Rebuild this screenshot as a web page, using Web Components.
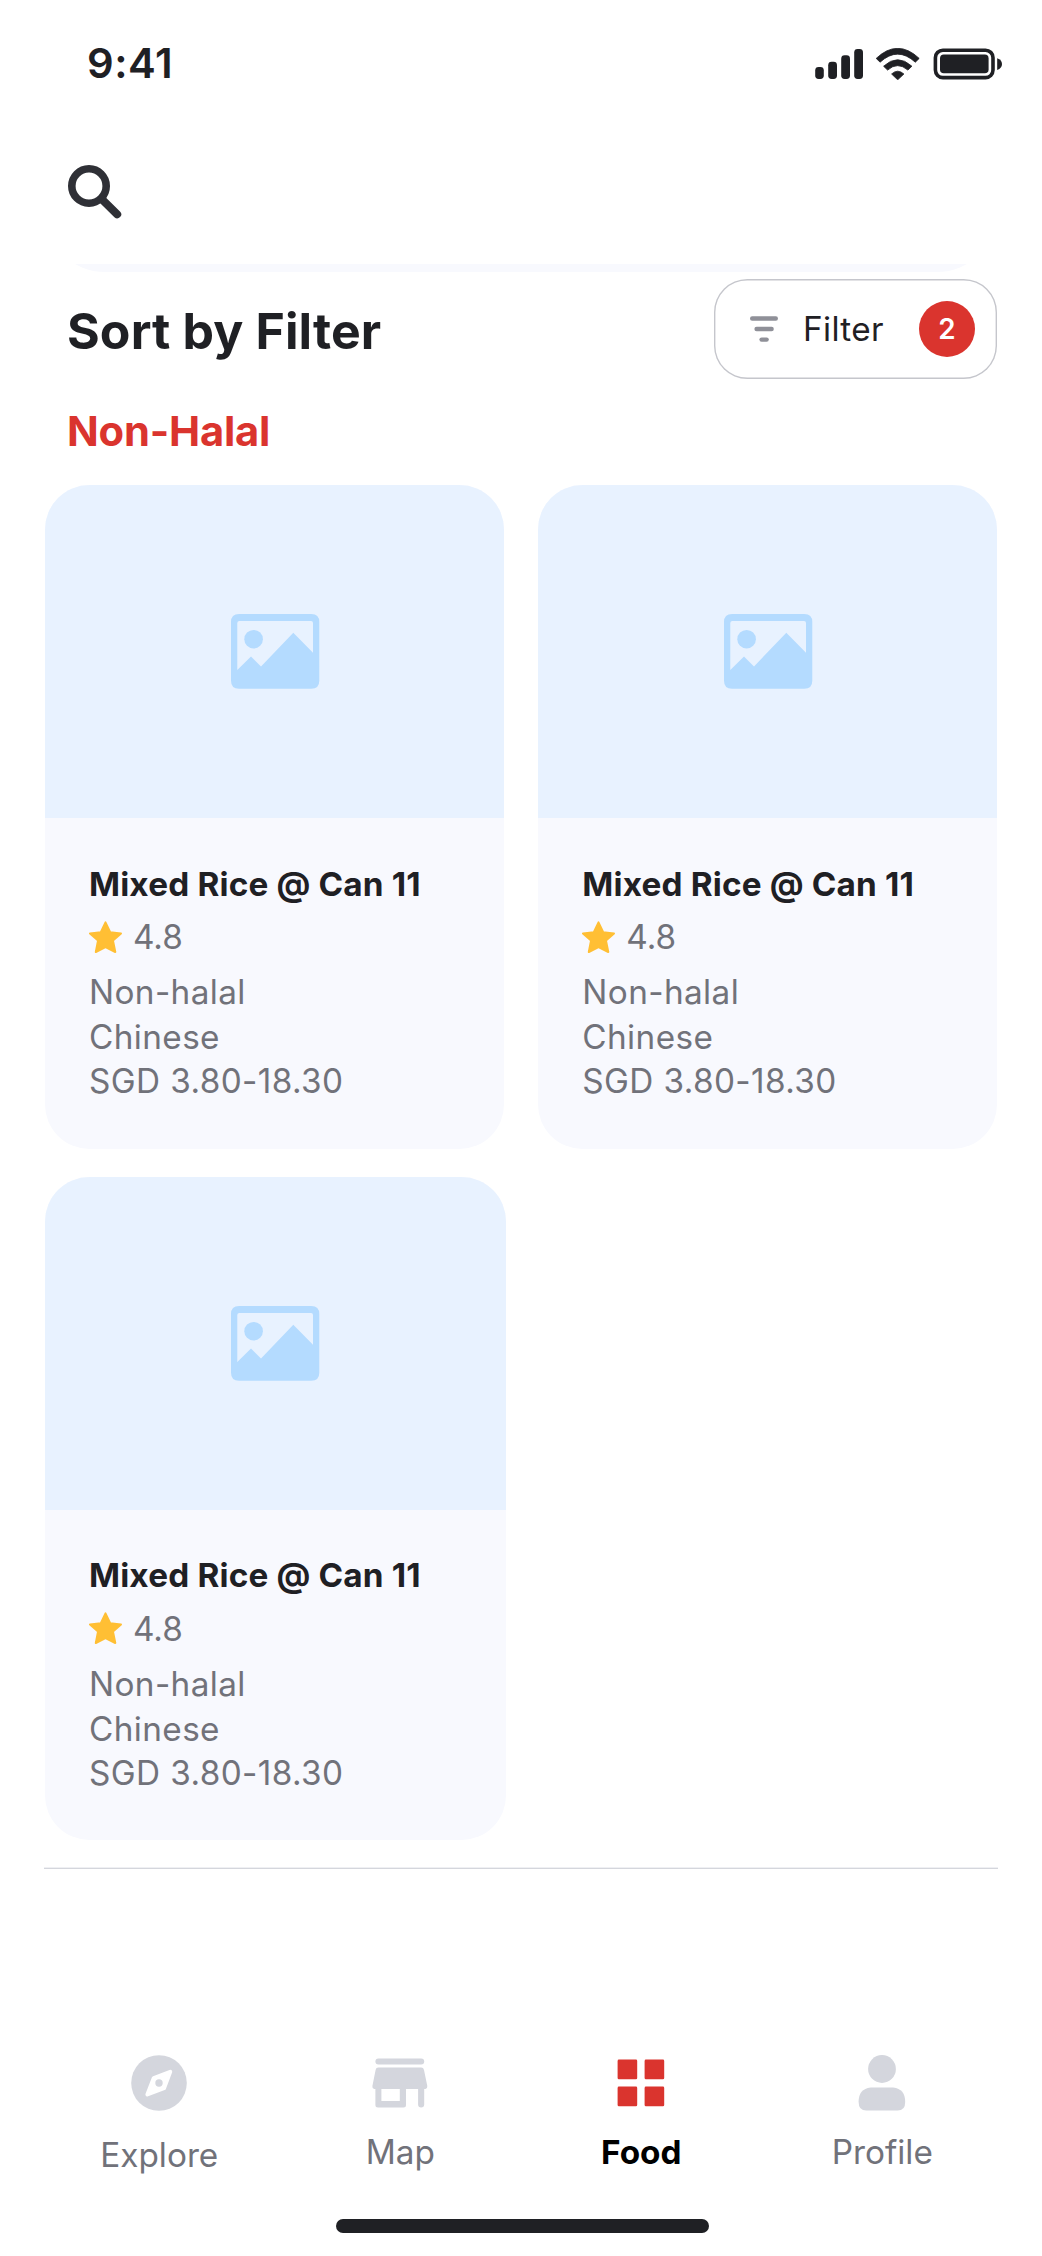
<!DOCTYPE html>
<html lang="en">
<head>
<meta charset="utf-8">
<title>Food</title>
<style>
html,body{margin:0;background:#fff}
body{font-family:Inter,"Liberation Sans",sans-serif;color:#1f2024;width:1042px;height:2256px;overflow:hidden}
</style>
</head>
<body>
<food-screen></food-screen>
<script>
const define = (name, html) => customElements.define(name, class extends HTMLElement {
  constructor() {
    super();
    const t = document.createElement('template');
    t.innerHTML = html;
    this.attachShadow({ mode: 'open' }).append(t.content.cloneNode(true));
  }
});

define('status-bar', `
<style>
:host{display:flex;justify-content:space-between;align-items:center;height:125px;padding:0 40px 0 87px;box-sizing:border-box}
.time{font-weight:600;font-size:41.7px;line-height:50px;letter-spacing:.5px}
svg{display:block;margin-top:3px}
</style>
<div class="time"><slot></slot></div>
<svg width="187" height="32" viewBox="815 48 187 32" fill="#1f2024">
<rect x="815.2" y="67" width="8.6" height="12" rx="3.4"/><rect x="828.2" y="61.8" width="8.8" height="17.2" rx="3.4"/><rect x="841.2" y="55.3" width="8.8" height="23.7" rx="3.4"/><rect x="854.2" y="49" width="8.8" height="30" rx="3.4"/>
<path d="M876.2 58.4Q897.6 38.2 919.2 58.4L915.3 62.2Q897.6 46.1 880.1 62.2Z" stroke="#1f2024" stroke-width=".8" stroke-linejoin="round"/>
<path d="M883.6 66.2Q897.6 53.2 911.9 66.2L907.9 70.1Q897.6 61.2 887.6 70.1Z" stroke="#1f2024" stroke-width=".8" stroke-linejoin="round"/>
<path d="M891.6 74Q897.6 68.4 903.9 74L897.7 79.8Z" stroke="#1f2024" stroke-width=".8" stroke-linejoin="round"/>
<rect x="935.4" y="50.2" width="57.6" height="27.4" rx="7.5" fill="none" stroke="#1f2024" stroke-width="3.6"/>
<rect x="940" y="54.6" width="48.6" height="18.6" rx="3.8"/>
<path d="M997.2 58.2Q1002 60 1002 64T997.2 70Z"/>
</svg>`);

define('search-header', `
<style>:host{display:block;height:139px;padding:39px 0 0 67px;box-sizing:border-box}svg{display:block}</style>
<svg width="56" height="56" viewBox="67 164 56 56" fill="none" stroke="#2f3036"><circle cx="89" cy="186" r="17.2" stroke-width="7.6"/><path d="M102 199.4L117.2 214.3" stroke-width="8" stroke-linecap="round"/></svg>`);

define('scrolled-card', `
<style>:host{display:flex;align-items:flex-end;height:8px;overflow:hidden;padding:0 45px}div{flex:1;height:140px;border-radius:60px;background:#f8f9fe}</style>
<div></div>`);

define('filter-button', `
<style>
:host{display:flex;align-items:center;width:283px;height:100px;box-sizing:border-box;padding:0 22px 0 36px;border-radius:33.3px;box-shadow:inset 0 0 0 1.4px #c5c6cc;font-size:33.3px;letter-spacing:.33px}
.label{margin-left:25px;flex:1;margin-top:-1px}
.badge{width:56px;height:56px;border-radius:50%;background:#da342e;color:#fff;font-weight:600;font-size:27.8px;letter-spacing:0;display:flex;align-items:center;justify-content:center;line-height:58px}
</style>
<svg width="28" height="26" viewBox="0 0 28 26" fill="#8f9098"><rect y=".3" width="28" height="4.4" rx="2.2"/><rect x="4.4" y="10.8" width="19.4" height="4.4" rx="2.2"/><rect x="9.4" y="21.4" width="9.4" height="4.4" rx="2.2"/></svg>
<span class="label"><slot></slot></span><span class="badge"><slot name="count"></slot></span>`);

define('section-heading', `
<style>
:host{display:block;height:213px}
.row{display:flex;justify-content:space-between;align-items:flex-start;padding:7px 45px 0 67px}
h1{margin:22px 0 0;font-weight:700;font-size:50px;line-height:60px;letter-spacing:.12px}
h2{margin:27px 0 0 67px;font-size:41.7px;line-height:50px;font-weight:700;color:#da342e;letter-spacing:-.2px}
</style>
<div class="row"><h1><slot></slot></h1><slot name="action"></slot></div>
<h2><slot name="category"></slot></h2>`);

define('food-card', `
<style>
:host{display:block;width:459.3px;height:663.5px;border-radius:44.5px;overflow:hidden;background:#f8f9fe}
.media{height:333px;background:#e8f2ff;display:flex;align-items:center;padding-left:186.3px}
.media svg{display:block}
.body{padding:45.5px 44.3px 0}
h3{margin:0;font-size:33.3px;line-height:40px;font-weight:700;white-space:nowrap;letter-spacing:.17px}
.rating{display:flex;align-items:center;gap:11px;height:40px;margin-top:13.5px;font-size:33.3px;line-height:40px;color:#71727a}
.rating svg{display:block}
.meta{margin-top:13.2px;font-size:33.3px;line-height:44.5px;letter-spacing:.4px;color:#71727a}
::slotted(div){height:44.5px}
</style>
<div class="media"><svg width="89" height="75" viewBox="231 614.2 89 75"><path fill="#b4dbff" fill-rule="evenodd" d="M239 614.2H311.3Q319.3 614.2 319.3 622.2V681Q319.3 689 311.3 689H239Q231 689 231 681V622.2Q231 614.2 239 614.2ZM239.3 621.2Q237.3 621.2 237.3 623.2V670.3L251 656.7L261 666.6L293.3 633L313 652.9V623.2Q313 621.2 311 621.2Z"/><circle cx="253.6" cy="639.4" r="9.3" fill="#b4dbff"/></svg></div>
<div class="body"><h3><slot></slot></h3>
<div class="rating"><svg width="33" height="33" viewBox="0 0 33 33"><path fill="#ffbf34" stroke="#ffbf34" stroke-width="2" stroke-linejoin="round" d="M16.5 1.4L21.2 11.2L32 12.4L24 19.6L26.3 31L16.5 26L6.8 31L9 19.6L1 12.4L11.8 11.2Z"/></svg><span><slot name="rating"></slot></span></div>
<div class="meta"><slot name="meta"></slot></div></div>`);

define('card-grid', `
<style>:host{display:flex;flex-wrap:wrap;gap:28.4px 34px;padding:0 44.7px;height:1382px;align-content:flex-start;box-sizing:border-box}</style><slot></slot>`);

define('nav-tab', `
<style>
:host{display:flex;flex-direction:column;align-items:center;flex:none;width:241px;font-size:33.3px;line-height:40px;color:#71727a}
:host([active]){color:#000;font-weight:700}
:host([low]) .label{margin-top:24px}
.label{margin-top:21px}
</style>
<slot name="icon"></slot><span class="label"><slot></slot></span>`);

define('tab-bar', `
<style>
:host{display:block;height:352px}
.line{height:2px;margin:0 44px;background:linear-gradient(#eff0f3 50%,#d4d6dd 50%)}
.tabs{display:flex;padding:186px 0 0 38.8px}
</style><div class="line"></div><div class="tabs"><slot></slot></div>`);

define('home-indicator', `
<style>:host{display:flex;padding-left:336px}div{width:372.5px;height:14.4px;border-radius:8px;background:#1f2024}</style><div></div>`);

define('food-screen', `
<style>:host{display:block}svg{display:block;flex:none}</style>
<status-bar>9:41</status-bar>
<search-header></search-header>
<scrolled-card></scrolled-card>
<section-heading>Sort by Filter<filter-button slot="action">Filter<span slot="count">2</span></filter-button><span slot="category">Non-Halal</span></section-heading>
<card-grid>
${[0,1,2].map(i => `<food-card${i===2?' style="width:461px"':''}>Mixed Rice @ Can 11<span slot="rating">4.8</span><div slot="meta">Non-halal</div><div slot="meta">Chinese</div><div slot="meta">SGD 3.80-18.30</div></food-card>`).join('')}
</card-grid>
<tab-bar>
<nav-tab low><svg slot="icon" width="56" height="56" viewBox="0 0 56 56"><circle cx="28" cy="28" r="27.8" fill="#d4d6dd"/><path fill="#fff" stroke="#fff" stroke-width="4" stroke-linejoin="round" d="M22.8 23L39.2 16.8L33 33.2L16.4 39.5Z"/><circle cx="28" cy="28" r="3.7" fill="#d4d6dd"/></svg>Explore</nav-tab>
<nav-tab><svg slot="icon" width="56" height="56" viewBox="0 0 56 56" fill="#d4d6dd"><rect x="3.4" y="3.6" width="48.8" height="6" rx="3"/><path fill-rule="evenodd" d="M6.2 12.6H49.2Q51.5 12.6 52 15L55.3 31Q55.6 33.6 53.4 34H52.2V49.5A3 3 0 0 1 46.1 49.5V34H34V50Q34 52.5 31.5 52.5H6Q3.4 52.5 3.4 50V34H2.2Q0 33.6.4 31L3.6 15Q4 12.6 6.2 12.6ZM9.4 34V46H27.8V34Z"/></svg>Map</nav-tab>
<nav-tab active><svg slot="icon" width="56" height="56" viewBox="0 0 56 56" fill="#da342e"><rect x="4.6" y="4.6" width="19.6" height="19.6" rx="1.3"/><rect x="31.6" y="4.6" width="19.6" height="19.6" rx="1.3"/><rect x="4.6" y="31.6" width="19.6" height="19.6" rx="1.3"/><rect x="31.6" y="31.6" width="19.6" height="19.6" rx="1.3"/></svg>Food</nav-tab>
<nav-tab><svg slot="icon" width="56" height="56" viewBox="0 0 56 56" fill="#d4d6dd"><circle cx="28" cy="14" r="13.9"/><path d="M16.6 32.5H39.2Q51.2 33.8 51.2 47Q51.2 55.6 43.6 55.6H12.3Q4.6 55.6 4.6 47Q4.6 33.8 16.6 32.5Z"/></svg>Profile</nav-tab>
</tab-bar>
<home-indicator></home-indicator>`);
</script>
</body>
</html>
